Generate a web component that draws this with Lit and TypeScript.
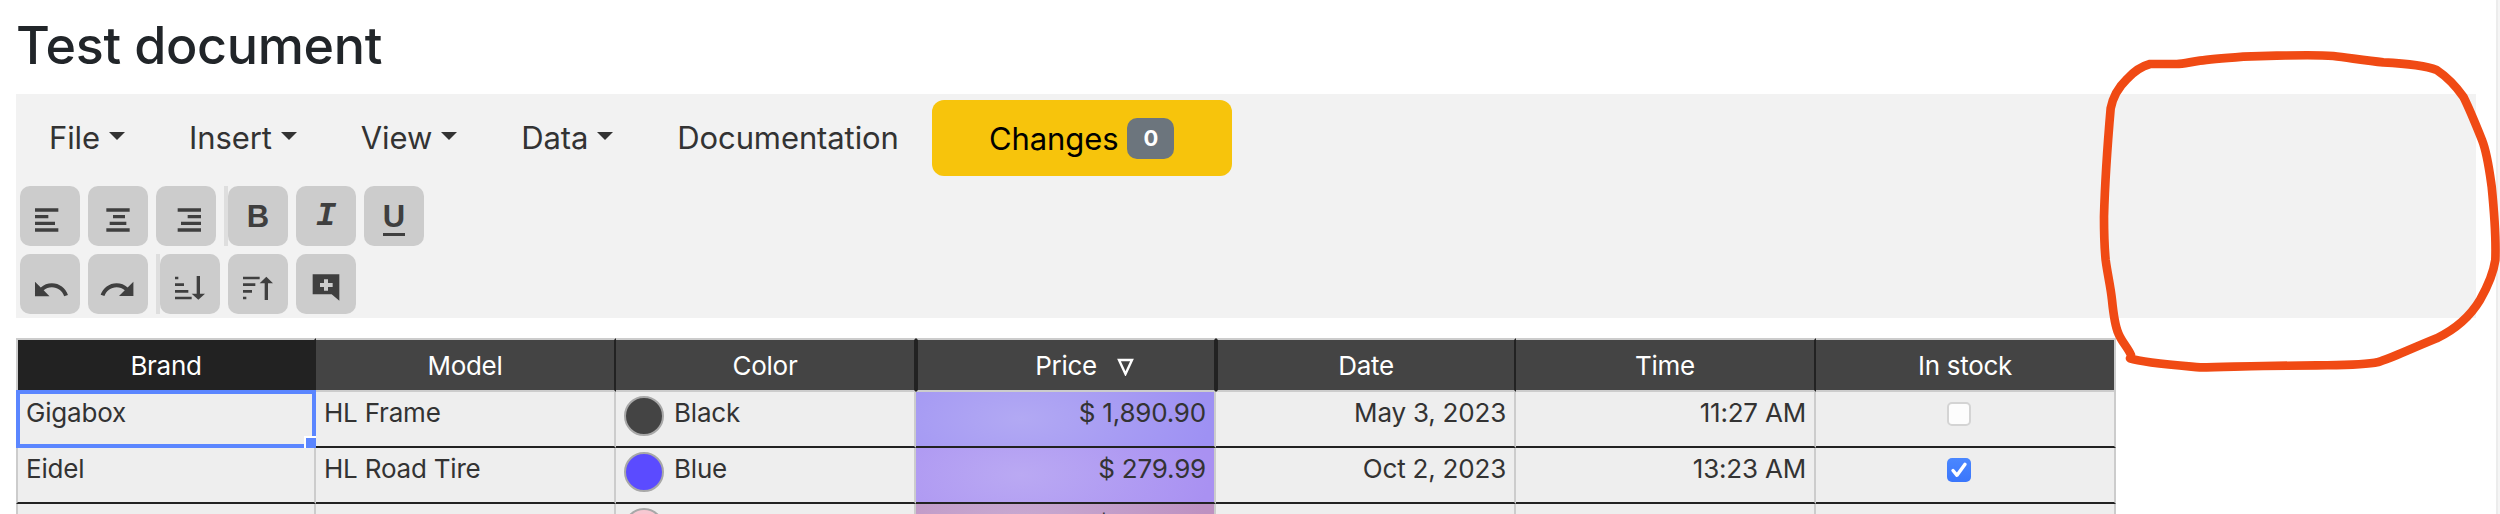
import { LitElement, html, css } from "lit";
import { customElement } from "lit/decorators.js";

const UNDO = "M12.5 8c-2.65 0-5.05.99-6.9 2.6L2 7v9h9l-3.62-3.62c1.39-1.16 3.16-1.88 5.12-1.88 3.54 0 6.55 2.31 7.6 5.5l2.37-.78C21.08 11.03 17.15 8 12.5 8z";
const REDO = "M18.4 10.6C16.55 8.99 14.15 8 11.5 8c-4.65 0-8.58 3.03-9.96 7.22L3.9 16c1.05-3.19 4.05-5.5 7.6-5.5 1.95 0 3.73.72 5.12 1.88L13 16h9V7l-3.6 3.6z";
const SCRIBBLE = "M240 985 C280 998 360 1004 450 1012 C520 1012 580 1008 640 1008 L800 1006 C870 1005 940 1006 985 996 C1020 986 1060 966 1160 925 C1220 896 1260 860 1290 810 C1310 775 1330 730 1336 690 C1338 640 1334 560 1325 470 C1318 420 1312 370 1296 330 C1280 290 1260 240 1240 200 C1215 165 1190 140 1160 120 C1120 104 1060 100 1000 97 C950 92 900 84 850 78 C800 74 740 76 680 77 L580 80 C530 84 480 88 450 92 C420 96 400 102 380 102 L300 102 C270 110 250 126 230 148 C205 172 190 195 182 235 C172 350 165 450 162 560 C162 600 163 650 167 690 C172 730 182 770 186 810 C190 850 194 885 205 910 C215 935 235 955 243 975";

type Row = { brand: string; model: string; dot: string; color: string; price: string; date: string; time: string; stock: boolean };
const rows: Row[] = [
  { brand: "Gigabox", model: "HL Frame", dot: "d0", color: "Black", price: "$ 1,890.90", date: "May 3, 2023", time: "11:27 AM", stock: false },
  { brand: "Eidel", model: "HL Road Tire", dot: "d1", color: "Blue", price: "$ 279.99", date: "Oct 2, 2023", time: "13:23 AM", stock: true },
];

const bars = (ls: number[][]) => ls.map(([a, b, y]) => `M${a} ${y}H${b}V${y + 10}H${a}z`).join("");

@customElement("app-root")
export class AppRoot extends LitElement {
  static styles = css`
    :host {
      display: grid;
      grid-template-columns: 1fr 4px;
      height: 514px;
      overflow: hidden;
      position: relative;
      background: #fff;
      font-family: Inter, "Liberation Sans", sans-serif;
      color: #333;
    }
    .rail { background: linear-gradient(90deg, #ececec 0 60%, #f5f5f5 60%); }
    .main { padding: 0 20px 0 16px; min-width: 0; }
    h1 {
      margin: 0;
      height: 94px;
      box-sizing: border-box;
      padding-top: 15px;
      font-size: 52px;
      line-height: 62px;
      font-weight: 500;
      color: #212529;
      letter-spacing: -0.35px;
    }
    .toolbar { background: #f2f2f2; padding-bottom: 4px; }
    .menu { display: flex; align-items: center; padding: 6px 0 10px 1px; height: 76px; }
    .item { display: flex; align-items: center; padding: 0 32px; font-size: 31px; letter-spacing: -0.1px; line-height: 40px; }
    .caret {
      width: 0; height: 0; margin: 0 0 5px 9px;
      border-left: 8.5px solid transparent;
      border-right: 8.5px solid transparent;
      border-top: 8.5px solid #333;
    }
    .changes {
      display: flex; align-items: center; justify-content: center;
      width: 300px; height: 76px; margin-left: 1px;
      background: #f7c40c; border-radius: 12px; color: #000;
      font-size: 31px; letter-spacing: -0.1px;
    }
    .badge {
      display: flex; align-items: center; justify-content: center;
      width: 47px; height: 41px; margin-left: 9px;
      background: #6c757d; border-radius: 10px;
      color: #fff; font-size: 22px; font-weight: 700; letter-spacing: 0;
    }
    .row { display: flex; padding-left: 4px; margin-bottom: 8px; }
    .row:last-child { margin-bottom: 0; }
    .btn {
      display: flex; align-items: center; justify-content: center;
      width: 60px; height: 60px; margin-right: 8px;
      background: #ccc; border-radius: 10px; color: #3f3f3f;
    }
    .btn svg { display: block; width: 60px; height: 60px; fill: #3f3f3f; }
    .sep { width: 4px; height: 60px; background: #dedede; }
    .b { font: 700 31px/1 "Liberation Sans", sans-serif; }
    .i { font: italic 700 34px/1 "Liberation Mono", monospace; }
    .u { font: 700 31px/1 "Liberation Sans", sans-serif; border-bottom: 3px solid #3f3f3f; padding-bottom: 1px; margin-top: 4px; }
    .table { display: grid; grid-template-columns: repeat(7, 300px); margin-top: 20px; }
    .th {
      box-sizing: border-box; height: 54px; position: relative;
      display: flex; align-items: center; justify-content: center;
      background: #444; color: #fff; font-size: 26px; letter-spacing: -0.3px;
      border-top: 2px solid #ccc; border-bottom: 2px solid #ccc; border-right: 2px solid #222;
    }
    .th.first { background: #222; border-left: 2px solid #ccc; }
    .th.thick { border-left: 2px solid #222; }
    .th.last { border-right-color: #ccc; }
    .sort { position: relative; display: block; }
    .sort svg { position: absolute; left: calc(100% + 20px); top: 8px; width: 17px; height: 18px; }
    .td {
      box-sizing: border-box; height: 56px; position: relative;
      padding: 8px 8px 0; background: #eee; font-size: 26px; line-height: 26px; letter-spacing: -0.2px;
      border-right: 2px solid #ccc; border-bottom: 2px solid #222;
    }
    .td.first { border-left: 2px solid #ccc; }
    .r { text-align: right; }
    .partial { padding-right: 102px; }
    .clr { display: flex; padding: 4px 8px 0; gap: 10px; }
    .clr span { padding-top: 4px; }
    .dot { box-sizing: border-box; flex: none; width: 40px; height: 40px; border-radius: 50%; border: 2.5px solid #a8a8a8; }
    .d0 { background: #444; }
    .d1 { background: #5b4bff; }
    .d2 { background: #f7c8d2; }
    .h0 { background: radial-gradient(ellipse 190px 90px at 35% 50%, #b2a9f3, #9e91f3); }
    .h1 { background: radial-gradient(ellipse 190px 90px at 35% 50%, #baa9f3, #a991f2); }
    .h2 { background: radial-gradient(ellipse 190px 90px at 35% 50%, #c9acd3, #bd91c1); }
    .chk { display: flex; justify-content: center; padding: 10px 12px 0 0; }
    .box { box-sizing: border-box; width: 24px; height: 24px; border-radius: 5px; background: #fdfdfd; border: 2px solid #d4d4d4; }
    .box.on { border: 0; background: linear-gradient(#4a87ff, #3a76fb); }
    .box svg { display: block; width: 24px; height: 24px; }
    .selected { position: absolute; inset: -2px; border: 4px solid #5b86ff; }
    .handle {
      position: absolute; right: -6px; bottom: -6px; box-sizing: border-box;
      width: 16px; height: 16px; background: #5b86ff; border: 2px solid #fff;
    }
    .ink { position: absolute; left: 2050px; top: 30px; width: 450px; height: 370px; overflow: visible; pointer-events: none; }
    .ink path { fill: none; stroke: #f04a14; stroke-width: 26; stroke-linecap: round; stroke-linejoin: round; }
  `;

  render() {
    return html`
      <div class="main">
        <h1>Test document</h1>
        <div class="toolbar">
          <div class="menu">
            ${["File", "Insert", "View", "Data"].map((m) => html`<div class="item">${m}<i class="caret"></i></div>`)}
            <div class="item">Documentation</div>
            <div class="changes">Changes<span class="badge">0</span></div>
          </div>
          <div class="row">
            <div class="btn"><svg viewBox="0 0 180 180"><path d=${bars([[45, 115, 67], [45, 85, 87], [45, 105, 107], [45, 115, 127]])}></path></svg></div>
            <div class="btn"><svg viewBox="0 0 180 180"><path d=${bars([[55, 125, 67], [75, 111, 87], [65, 115, 107], [55, 125, 127]])}></path></svg></div>
            <div class="btn"><svg viewBox="0 0 180 180"><path d=${bars([[65, 135, 67], [95, 135, 87], [75, 135, 107], [65, 135, 127]])}></path></svg></div>
            <div class="sep"></div>
            <div class="btn"><span class="b">B</span></div>
            <div class="btn"><span class="i">I</span></div>
            <div class="btn"><span class="u">U</span></div>
          </div>
          <div class="row">
            <div class="btn"><svg viewBox="0 0 180 180"><path transform="translate(35.3 49.2) scale(4.83)" d=${UNDO}></path></svg></div>
            <div class="btn"><svg viewBox="0 0 180 180"><path transform="translate(30.6 49.4) scale(4.8)" d=${REDO}></path></svg></div>
            <div class="sep"></div>
            <div class="btn"><svg viewBox="0 0 180 180"><path d="M45 68h10v8H45zM45 88h27v8H45zM45 108h40v8H45zM45 128h50v8H45zM110 66h10v53h15l-20 18-20-18h15z"></path></svg></div>
            <div class="btn"><svg viewBox="0 0 180 180"><path d="M45 68h50v8H45zM45 88h37v8H45zM45 108h27v8H45zM45 128h10v8H45zM115 68l20 20h-15v50h-10V88H95z"></path></svg></div>
            <div class="btn"><svg viewBox="0 0 180 180"><path fill-rule="evenodd" d="M50 61h80v79l-23-19H50zM84 76v11H72v12h12v11h12V99h14V87H96V76z"></path></svg></div>
          </div>
        </div>
        <div class="table">
          <div class="th first">Brand</div>
          <div class="th">Model</div>
          <div class="th">Color</div>
          <div class="th thick">
            <span class="sort">Price<svg viewBox="0 0 17 18"><polygon points="2,2 15,2 8.5,16" fill="none" stroke="#fff" stroke-width="2.4"></polygon></svg></span>
          </div>
          <div class="th thick">Date</div>
          <div class="th">Time</div>
          <div class="th last">In stock</div>
          ${rows.map((r, i) => html`
            <div class="td first">${r.brand}${i === 0 ? html`<div class="selected"></div><div class="handle"></div>` : ""}</div>
            <div class="td">${r.model}</div>
            <div class="td clr"><i class="dot ${r.dot}"></i><span>${r.color}</span></div>
            <div class="td r h${i}">${r.price}</div>
            <div class="td r">${r.date}</div>
            <div class="td r">${r.time}</div>
            <div class="td chk">${r.stock
              ? html`<div class="box on"><svg viewBox="0 0 24 24"><path d="M6 12.5l4 4.8 8-11" fill="none" stroke="#fff" stroke-width="3.4" stroke-linecap="round" stroke-linejoin="round"></path></svg></div>`
              : html`<div class="box"></div>`}</div>
          `)}
          <div class="td first"></div>
          <div class="td"></div>
          <div class="td clr"><i class="dot d2"></i></div>
          <div class="td r h2 partial">$</div>
          <div class="td"></div>
          <div class="td"></div>
          <div class="td"></div>
        </div>
      </div>
      <div class="rail"></div>
      <svg class="ink" viewBox="0 0 1350 1110"><path d=${SCRIBBLE}></path></svg>
    `;
  }
}
